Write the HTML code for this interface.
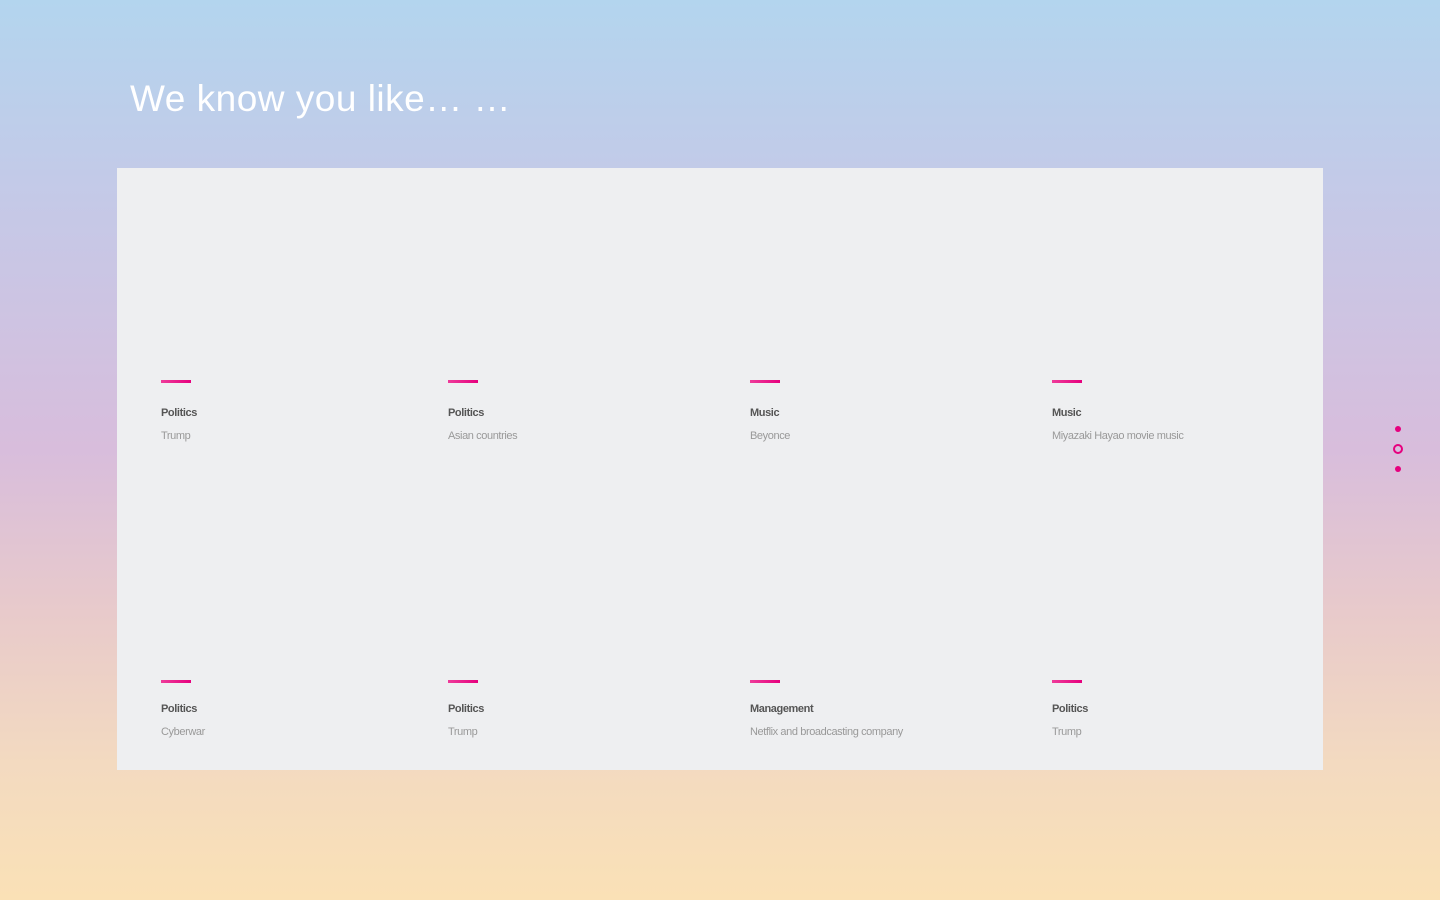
<!DOCTYPE html>
<html><head><meta charset="utf-8"><style>
html,body{margin:0;padding:0}
body{width:1440px;height:900px;position:relative;overflow:hidden;font-family:"Liberation Sans",sans-serif;
background:linear-gradient(180deg,#b3d5ee 0%,#c3cae8 20%,#d8bddc 50%,#e8cacb 68%,#f3dac0 85%,#fae1b6 100%);}
h1{position:absolute;left:130px;top:78px;margin:0;font-weight:400;font-size:37px;color:#fff;letter-spacing:0.5px}
.panel{position:absolute;left:117px;top:168px;width:1206px;height:602px;background:#eeeff1}
.card{position:absolute}
.bar{width:30px;height:3px;background:linear-gradient(90deg,#ee3c9a,#e6007e)}
.t{margin-top:24px;font-size:11px;font-weight:700;color:#555;letter-spacing:-0.4px}
.s{margin-top:11px;font-size:11px;color:#999;letter-spacing:-0.4px}
.dot{position:absolute;left:1395px;width:6px;height:6px;border-radius:50%;background:#e6007e}
.ring{position:absolute;left:1393px;top:444px;width:6px;height:6px;border-radius:50%;border:2px solid #e6007e}
</style></head><body>
<h1>We know you like… …</h1>
<div class="panel">
<div class="card" style="left:44px;top:212px"><div class="bar"></div><div class="t">Politics</div><div class="s">Trump</div></div>
<div class="card" style="left:331px;top:212px"><div class="bar"></div><div class="t">Politics</div><div class="s">Asian countries</div></div>
<div class="card" style="left:633px;top:212px"><div class="bar"></div><div class="t">Music</div><div class="s">Beyonce</div></div>
<div class="card" style="left:935px;top:212px"><div class="bar"></div><div class="t">Music</div><div class="s">Miyazaki Hayao movie music</div></div>
<div class="card" style="left:44px;top:512px"><div class="bar"></div><div class="t" style="margin-top:20px">Politics</div><div class="s">Cyberwar</div></div>
<div class="card" style="left:331px;top:512px"><div class="bar"></div><div class="t" style="margin-top:20px">Politics</div><div class="s">Trump</div></div>
<div class="card" style="left:633px;top:512px"><div class="bar"></div><div class="t" style="margin-top:20px">Management</div><div class="s">Netflix and broadcasting company</div></div>
<div class="card" style="left:935px;top:512px"><div class="bar"></div><div class="t" style="margin-top:20px">Politics</div><div class="s">Trump</div></div>
</div>
<div class="dot" style="top:426px"></div>
<div class="ring"></div>
<div class="dot" style="top:466px"></div>
</body></html>
